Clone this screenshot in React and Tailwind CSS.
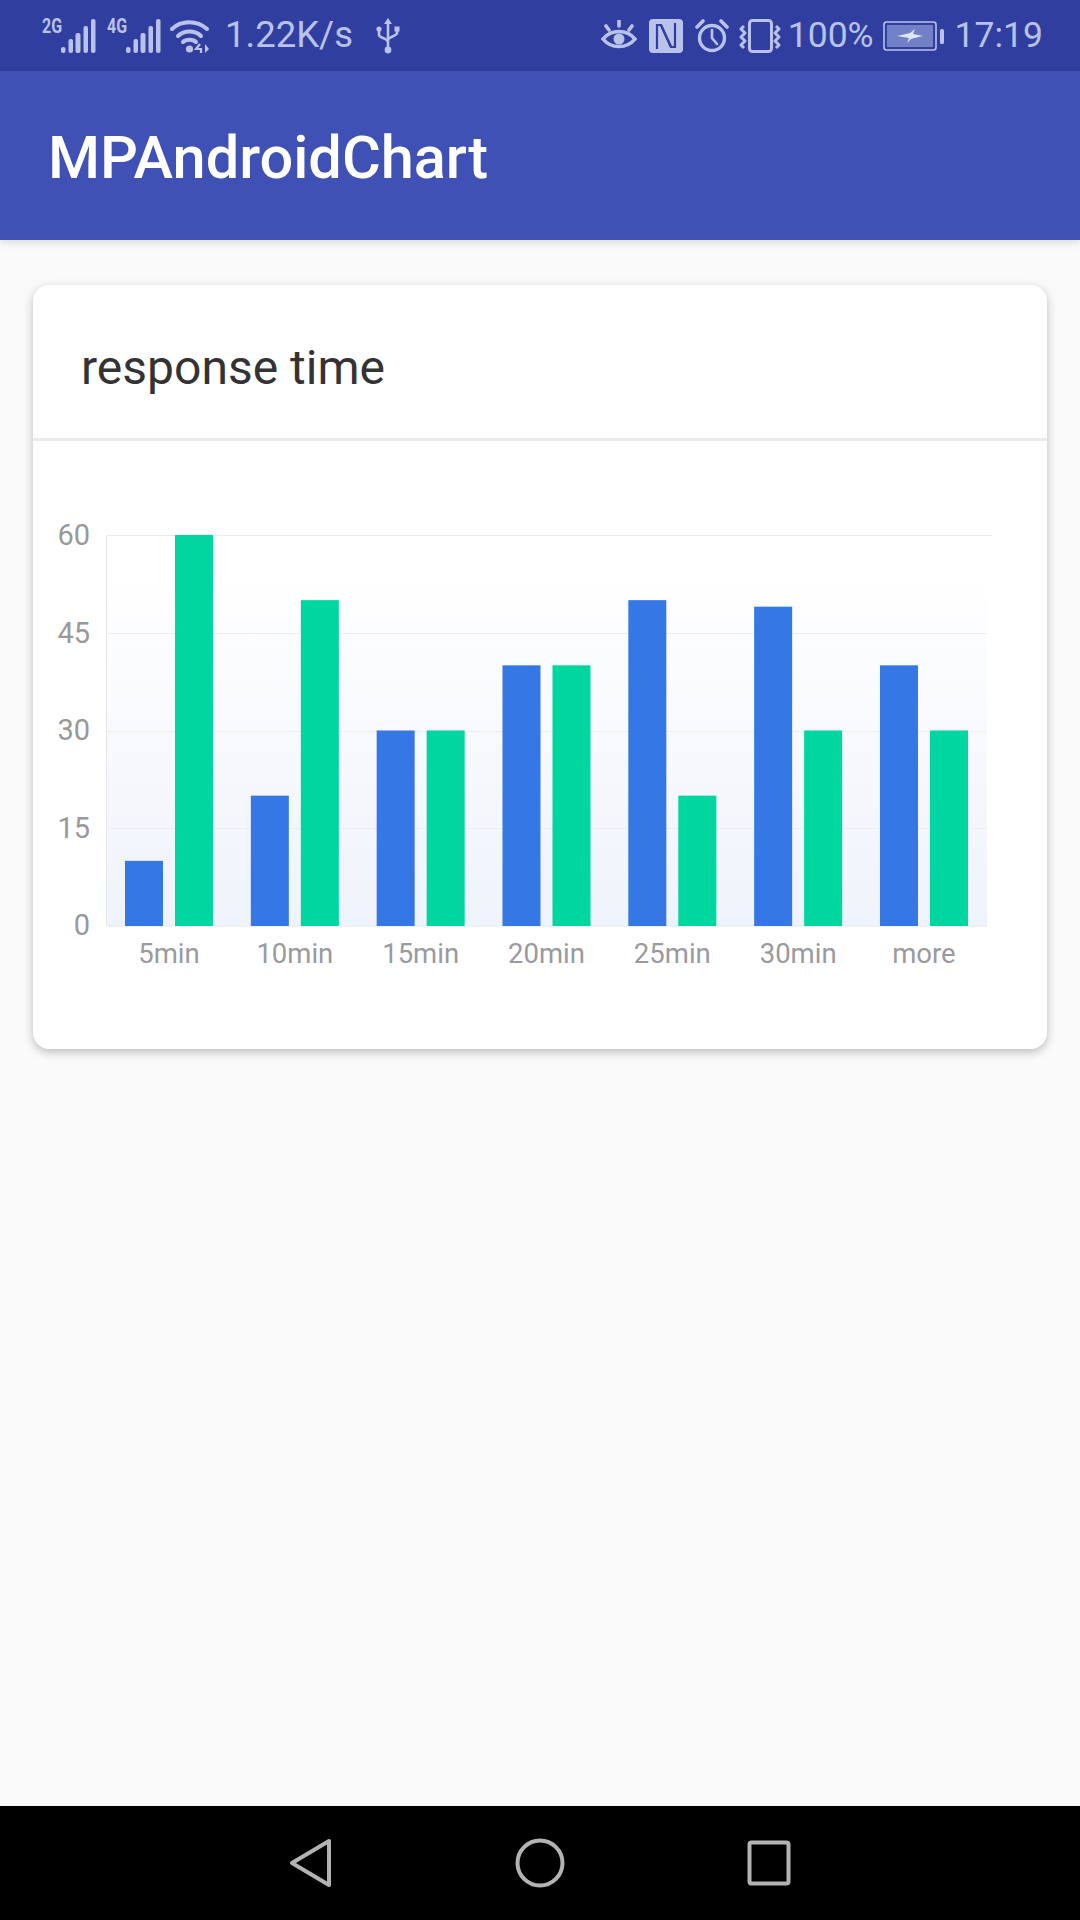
const font = { fontFamily: "Roboto, sans-serif" };

const data = [
  { label: "5min", a: 10, b: 60 },
  { label: "10min", a: 20, b: 50 },
  { label: "15min", a: 30, b: 30 },
  { label: "20min", a: 40, b: 40 },
  { label: "25min", a: 50, b: 20 },
  { label: "30min", a: 49, b: 30 },
  { label: "more", a: 40, b: 30 },
];

const ticks = [60, 45, 30, 15, 0];

function Signal({ text }) {
  const bars = [
    [0, 46, 4.5],
    [7.5, 38, 4.5],
    [14.5, 32, 5],
    [22.5, 25, 4.5],
    [30, 18, 4.5],
  ];
  return (
    <div className="flex w-[53px] h-[36px] relative">
      <span className="absolute left-0 top-[-2px] text-[20px] leading-[20px] font-bold text-[#b9c2ea] scale-x-[.8] origin-left" style={font}>
        {text}
      </span>
      <svg className="absolute left-[19px] top-0" width="35" height="36" viewBox="0 17 35 36" fill="#b9c2ea">
        {bars.map(([x, y, w]) => (
          <rect key={x} x={x} y={y} width={w} height={52 - y} rx="2" />
        ))}
      </svg>
    </div>
  );
}

function Wifi() {
  return (
    <svg width="40" height="34" viewBox="0 0 40 34" fill="none" stroke="#b9c2ea" strokeWidth="4" strokeLinecap="round">
      <path d="M2 10 C11 1 27 1 37 10" />
      <path d="M8 17 C14 11 25 11 31 17" />
      <path d="M13 23 C16 20 23 20 26 23" />
      <circle cx="19.5" cy="30" r="3.6" fill="#b9c2ea" stroke="none" />
      <path d="M30 25 L26 30 H31 V34" strokeWidth="2.2" strokeLinecap="butt" />
      <path d="M35 25 L39 30 L35 34 Z" fill="#b9c2ea" stroke="none" />
    </svg>
  );
}

function Usb() {
  return (
    <svg width="24" height="36" viewBox="0 0 24 36" fill="none" stroke="#b9c2ea" strokeWidth="2.6">
      <path d="M12 4 V31" />
      <path d="M12 0 L16 6 H8 Z" fill="#b9c2ea" stroke="none" />
      <circle cx="12" cy="32" r="3.4" fill="#b9c2ea" stroke="none" />
      <path d="M3 12 V17 C3 20 12 20 12 24" />
      <path d="M21 12 V15 C21 18 12 19 12 22" />
      <circle cx="3" cy="11" r="2.6" fill="#b9c2ea" stroke="none" />
      <rect x="18.5" y="8.5" width="5" height="5" fill="#b9c2ea" stroke="none" />
    </svg>
  );
}

function Eye() {
  return (
    <svg width="36" height="31" viewBox="0 0 36 31" fill="none" stroke="#b9c2ea" strokeWidth="3.6" strokeLinecap="round">
      <path d="M2 19 C10 9 26 9 34 19 C26 29 10 29 2 19 Z" />
      <circle cx="18" cy="19" r="5.5" fill="#b9c2ea" stroke="none" />
      <path d="M18 1 V6 M5 6 L8 10 M31 6 L28 10" />
    </svg>
  );
}

function Nfc() {
  return (
    <svg width="34" height="34" viewBox="0 0 34 34">
      <rect width="34" height="34" rx="4" fill="#b9c2ea" />
      <path d="M8 30 V6 H12 L22 28" fill="none" stroke="#303f9f" strokeWidth="2.2" />
      <path d="M26 4 V28 H22 L12 6" fill="none" stroke="#303f9f" strokeWidth="2.2" />
    </svg>
  );
}

function Alarm() {
  return (
    <svg width="34" height="34" viewBox="0 0 34 34" fill="none" stroke="#b9c2ea" strokeWidth="3.4" strokeLinecap="round">
      <circle cx="17" cy="19" r="12.5" />
      <path d="M17 11 V19 L22 25" strokeWidth="2.6" />
      <path d="M2 8 L8 2 M32 8 L26 2" strokeWidth="3.6" />
    </svg>
  );
}

function Vibrate() {
  return (
    <svg width="42" height="34" viewBox="0 0 42 34" fill="none" stroke="#b9c2ea" strokeWidth="3" strokeLinejoin="round">
      <rect x="10.5" y="1.5" width="22" height="31" rx="3" />
      <path d="M5 7 L2 10 L6 14 L2 18 L6 22 L2 26 L5 29" />
      <path d="M37 7 L40 10 L36 14 L40 18 L36 22 L40 26 L37 29" />
    </svg>
  );
}

function Battery() {
  return (
    <svg width="62" height="30" viewBox="0 0 62 30" fill="none">
      <rect x="1" y="1" width="52" height="28" rx="2.5" stroke="#b9c2ea" strokeWidth="1.6" />
      <rect x="4" y="4" width="46" height="22" fill="#7281c6" />
      <path d="M14 15 L27 12 L32 8 L30 13 L40 15 L28 18 L24 22 L26 17 Z" fill="#dfe4f7" />
      <rect x="57" y="8" width="4" height="15" rx="1.5" fill="#b9c2ea" />
    </svg>
  );
}

function StatusBar() {
  return (
    <div className="h-[71px] shrink-0 bg-[#303f9f] flex items-center justify-between pl-[42px] pr-[37px] text-[#b9c2ea] text-[35.5px]" style={font}>
      <div className="flex items-center">
        <Signal text="2G" />
        <div className="w-[12px]" />
        <Signal text="4G" />
        <div className="w-[10px]" />
        <Wifi />
        <span className="ml-[15px] leading-none text-[36.5px]">1.22K/s</span>
        <div className="ml-[23px]">
          <Usb />
        </div>
      </div>
      <div className="flex items-center">
        <Eye />
        <div className="ml-[12px]">
          <Nfc />
        </div>
        <div className="ml-[12px]">
          <Alarm />
        </div>
        <div className="ml-[10px]">
          <Vibrate />
        </div>
        <span className="ml-[7px] leading-none">100%</span>
        <div className="ml-[9px]">
          <Battery />
        </div>
        <span className="ml-[10px] leading-none">17:19</span>
      </div>
    </div>
  );
}

function Chart() {
  const zero = 926;
  const unit = 6.517;
  const startY = 441;
  return (
    <svg className="block" width="1014" height="608" viewBox={`33 ${startY} 1014 608`} style={font}>
      <defs>
        <linearGradient id="plot-fade" x1="0" y1="0" x2="0" y2="1">
          <stop offset="0" stopColor="#ffffff" />
          <stop offset="1" stopColor="#eff3fb" />
        </linearGradient>
      </defs>
      <rect x="106" y="570" width="881" height="356" fill="url(#plot-fade)" />
      <path d="M106.5 535 V926" stroke="#e6e6e6" strokeWidth="1" />
      <path d="M106 535.5 H992" stroke="#ececec" strokeWidth="1" />
      {[633, 731, 828].map((y) => (
        <path key={y} d={`M106 ${y}.5 H987`} stroke="#eeeeee" strokeWidth="1" />
      ))}
      <path d="M106 926 H987" stroke="#e6e8ee" strokeWidth="1" />
      {ticks.map((t, i) => (
        <text key={t} x="90" y={545 + i * 97.5} textAnchor="end" fontSize="29" fill="#999999">
          {t}
        </text>
      ))}
      {data.map((d, i) => {
        const x = 125 + i * 125.83;
        return (
          <g key={d.label}>
            <rect x={x} y={zero - d.a * unit} width="38" height={d.a * unit} fill="#3578e5" />
            <rect x={x + 50} y={zero - d.b * unit} width="38" height={d.b * unit} fill="#00d6a0" />
            <text x={x + 44} y="963" textAnchor="middle" fontSize="27.5" fill="#9a9a9f">
              {d.label}
            </text>
          </g>
        );
      })}
    </svg>
  );
}

function NavBar() {
  return (
    <div className="h-[114px] shrink-0 bg-black flex items-center justify-center gap-[182px]">
      <svg width="44" height="50" viewBox="0 0 44 50" fill="none" stroke="#b3b3b3" strokeWidth="4" strokeLinejoin="round">
        <path d="M40 3 V47 L3 25 Z" />
      </svg>
      <svg width="50" height="50" viewBox="0 0 50 50" fill="none" stroke="#b3b3b3" strokeWidth="4">
        <circle cx="25" cy="25" r="22.5" />
      </svg>
      <svg width="44" height="46" viewBox="0 0 44 46" fill="none" stroke="#b3b3b3" strokeWidth="4" strokeLinejoin="round">
        <rect x="2.5" y="2.5" width="39" height="41" rx="2" />
      </svg>
    </div>
  );
}

export default function App() {
  return (
    <div className="w-[1080px] h-[1920px] flex flex-col bg-[#fafafa]" style={font}>
      <StatusBar />
      <div className="h-[169px] shrink-0 bg-[#3f51b5] flex items-center pl-[48px] pt-[6px] shadow-[0_3px_8px_rgba(0,0,0,0.12)] z-10">
        <span className="text-[59.5px] leading-none font-medium text-white">MPAndroidChart</span>
      </div>
      <div className="flex-1 pt-[45px] px-[33px]">
        <div className="h-[764px] bg-white rounded-[16px] overflow-hidden shadow-[0_3px_10px_rgba(0,0,0,0.25)]">
          <div className="h-[156px] border-b-[3px] border-[#ebebeb] flex items-center pl-[48px] pt-[13px]">
            <span className="text-[48px] leading-none text-[#333333]">response time</span>
          </div>
          <Chart />
        </div>
      </div>
      <NavBar />
    </div>
  );
}
